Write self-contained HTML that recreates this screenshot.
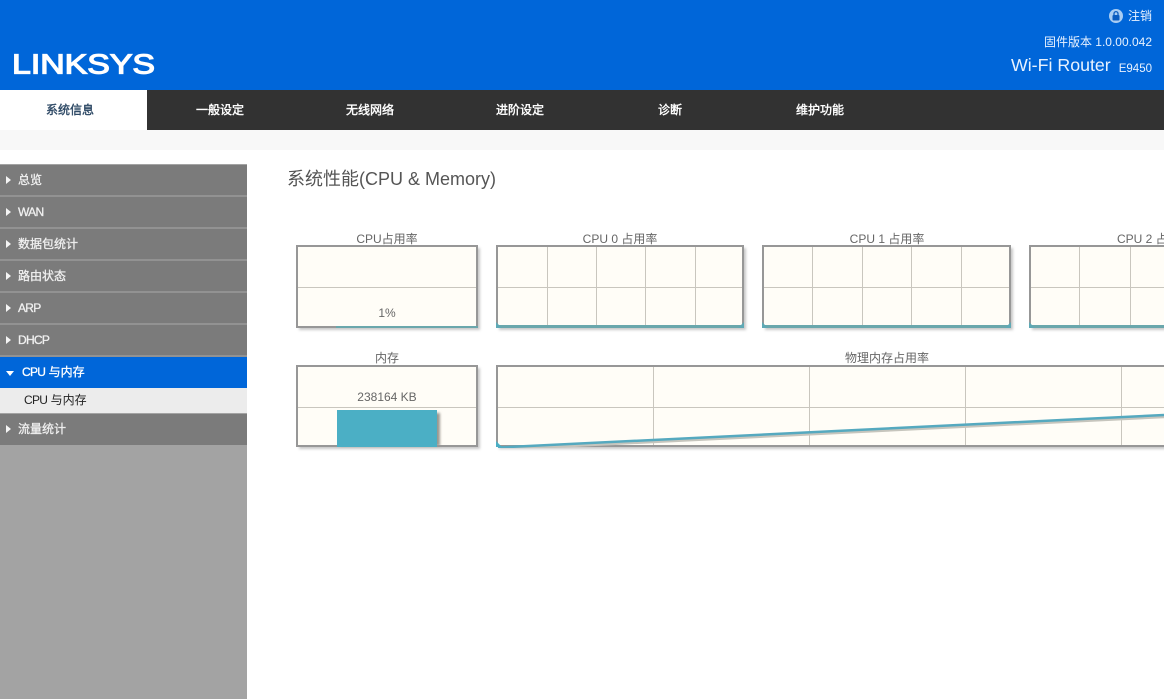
<!DOCTYPE html>
<html lang="zh"><head><meta charset="utf-8"><title>Linksys</title>
<style>
html,body{margin:0;padding:0;width:1164px;height:699px;overflow:hidden;background:#fff}
body{position:relative;font-family:"Liberation Sans","Noto Sans CJK SC",sans-serif;font-size:12px}
.a{position:absolute;white-space:nowrap}
#hd{left:0;top:0;width:1164px;height:90px;background:#0066d9}
#nav{left:0;top:90px;width:1164px;height:40px;background:#323232}
#strip{left:0;top:130px;width:1164px;height:20px;background:#f8f8f8}
.n{top:90px;width:150px;height:40px;line-height:40px;text-align:center;color:#fff;font-size:12px;-webkit-text-stroke:.4px currentColor}
.r{color:#e8f2ff;right:12px}
.v{font-size:11.5px}
#side{left:0;top:164px;width:247px;height:535px;background:#a3a3a3}
.m{left:0;width:247px;height:30px;line-height:30px;background:#7b7b7b;color:#f0f0f0;font-size:12px;text-indent:18px;-webkit-text-stroke:.3px currentColor;border-bottom:2px solid #929292}
.m:before{content:"";position:absolute;left:6px;top:11px;border-left:5px solid #f4f4f4;border-top:4px solid transparent;border-bottom:4px solid transparent}
.m span,.b span,.c span{letter-spacing:-.7px}
.l{color:#666;font-size:12px;text-align:center}
</style></head><body>
<div class="a" id="hd"></div>
<svg class="a" style="left:0;top:40px" width="170" height="40"><text x="12" y="33.500" font-family="Liberation Sans" font-size="27.500" fill="#fff" textLength="143" lengthAdjust="spacingAndGlyphs" stroke="#fff" stroke-width="1.200">LINKSYS</text></svg>
<svg class="a" style="left:1109px;top:9px" width="14" height="14" viewBox="0 0 14 14"><circle cx="7" cy="7" r="7" fill="#a9cdf3"/><rect x="3.500" y="6" width="7" height="5.500" rx="1" fill="#0a5cc0"/><path d="M5 6V4.600a2 2 0 0 1 4 0V6" fill="none" stroke="#0a5cc0" stroke-width="1.300"/></svg>
<div class="a r" style="top:8px;line-height:16px">注销</div>
<div class="a r" style="top:34px;line-height:16px;font-size:12px">固件版本 <span>1.0.00.042</span></div>
<div class="a r" style="top:54px;line-height:22px;font-size:17.800px"><span>Wi-Fi Router</span><span class="v" style="margin-left:8px;position:relative;top:1px">E9450</span></div>
<div class="a" id="nav"></div>
<div class="a" style="left:0;top:90px;width:147px;height:40px;background:#fff"></div>
<div class="a n" style="left:-5px;color:#2f4a66">系统信息</div>
<div class="a n" style="left:145px">一般设定</div>
<div class="a n" style="left:295px">无线网络</div>
<div class="a n" style="left:445px">进阶设定</div>
<div class="a n" style="left:595px">诊断</div>
<div class="a n" style="left:745px">维护功能</div>
<div class="a" id="strip"></div>
<div class="a" id="side"></div>
<div class="a m" style="top:165px">总览</div>
<div class="a m" style="top:197px"><span>WAN</span></div>
<div class="a m" style="top:229px">数据包统计</div>
<div class="a m" style="top:261px">路由状态</div>
<div class="a m" style="top:293px"><span>ARP</span></div>
<div class="a m" style="top:325px"><span>DHCP</span></div>
<div class="a b" style="left:0;top:357px;width:247px;height:31px;line-height:31px;background:#0066d9;color:#fff;text-indent:22px;-webkit-text-stroke:.3px currentColor"><span>CPU</span> 与内存</div>
<div class="a" style="left:6px;top:371px;border-top:5px solid #fff;border-left:4px solid transparent;border-right:4px solid transparent"></div>
<div class="a c" style="left:0;top:388px;width:247px;height:25px;line-height:25px;background:#ececec;color:#222;text-indent:24px"><span>CPU</span> 与内存</div>
<div class="a m" style="top:414px;border:0;height:31px">流量统计</div>
<div class="a" style="left:287px;top:167px;line-height:24px;font-size:18px;color:#555">系统性能(CPU &amp; Memory)</div>
<svg class="a" style="left:0;top:0" width="1164" height="699" shape-rendering="crispEdges">
<defs><filter id="s" x="-10%" y="-10%" width="120%" height="130%"><feGaussianBlur stdDeviation="1.200"/></filter>
<clipPath id="cl"><rect x="496" y="366" width="668" height="82"/></clipPath></defs>
<g fill="#c8c8c8" filter="url(#s)" shape-rendering="auto">
<rect x="299" y="248" width="181" height="82"/><rect x="499" y="248" width="247" height="82"/><rect x="765" y="248" width="248" height="82"/><rect x="1032" y="248" width="150" height="82"/>
<rect x="299" y="368" width="181" height="81"/><rect x="499" y="368" width="690" height="81"/>
</g>
<g fill="#fffdf7" stroke="#979797" stroke-width="2">
<rect x="297" y="246" width="180" height="81"/><rect x="497" y="246" width="246" height="81"/><rect x="763" y="246" width="247" height="81"/><rect x="1030" y="246" width="140" height="81"/>
<rect x="297" y="366" width="180" height="80"/><rect x="497" y="366" width="680" height="80"/>
</g>
<g stroke="#c9c6be" stroke-width="1">
<path d="M298 287.500H476M498 287.500H742M764 287.500H1009M1031 287.500H1164M298 407.500H476M498 407.500H1164"/>
<path d="M547.500 247V326M596.500 247V326M645.500 247V326M695.500 247V326M812.500 247V326M862.500 247V326M911.500 247V326M961.500 247V326M1079.500 247V326M1130.500 247V326M653.500 367V445M809.500 367V445M965.500 367V445M1121.500 367V445"/>
</g>
<g fill="#6aa7ac">
<rect x="336" y="326" width="142" height="2"/><rect x="497" y="325" width="247" height="3"/><rect x="763" y="325" width="248" height="3"/><rect x="1030" y="325" width="134" height="3"/>
</g>
<g shape-rendering="auto" fill="#5fa9b5">
<path d="M496 322l6 6h-6zM744 322l-6 6h6zM762 322l6 6h-6zM1011 322l-6 6h6zM1029 322l6 6h-6z"/>
</g>
<rect x="340" y="413" width="100" height="33" fill="#9a978f" filter="url(#s)" shape-rendering="auto"/>
<rect x="298" y="445" width="178" height="2" fill="#979797"/>
<rect x="337" y="410" width="100" height="37" fill="#4bafc5"/>
<g shape-rendering="auto" fill="none" clip-path="url(#cl)">
<path d="M498 449.500L1164 417" stroke="#c6c5bd" stroke-width="2.500"/>
<path d="M498 447.500L1164 415" stroke="#55a9bf" stroke-width="2.500"/>
</g>
<path d="M496 441l6 6h-6z" fill="#4bafc5" shape-rendering="auto"/>
</svg>
<div class="a l" style="left:296px;top:232px;width:182px;line-height:15px">CPU占用率</div>
<div class="a l" style="left:496px;top:232px;width:248px;line-height:15px">CPU 0 占用率</div>
<div class="a l" style="left:762px;top:232px;width:250px;line-height:15px">CPU 1 占用率</div>
<div class="a l" style="left:1117px;top:232px;line-height:15px">CPU 2 占用率</div>
<div class="a l" style="left:296px;top:306px;width:182px;line-height:15px">1%</div>
<div class="a l" style="left:296px;top:351px;width:182px;line-height:15px">内存</div>
<div class="a l" style="left:497px;top:351px;width:780px;line-height:15px">物理内存占用率</div>
<div class="a l" style="left:296px;top:390px;width:182px;line-height:15px">238164 KB</div>
</body></html>
